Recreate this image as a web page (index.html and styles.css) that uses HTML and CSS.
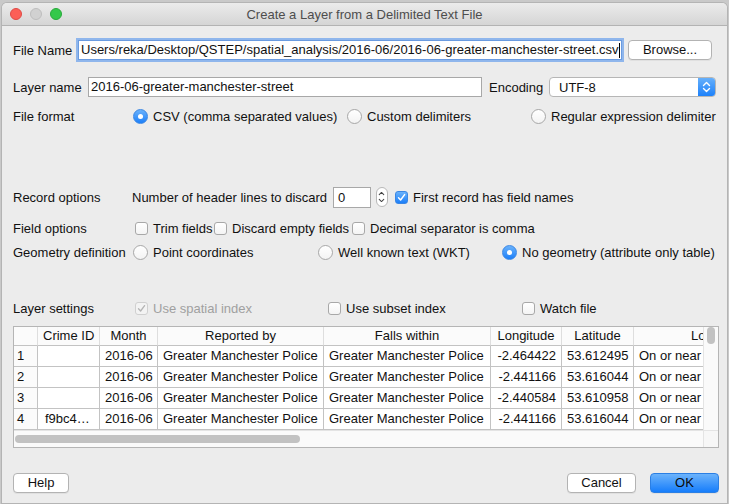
FILE: index.html
```html
<!DOCTYPE html>
<html>
<head>
<meta charset="utf-8">
<title>Create a Layer from a Delimited Text File</title>
<link rel="stylesheet" href="styles.css">
</head>
<body>
<div class="window">
  <div class="titlebar">
    <div class="lights"><span class="light red"></span><span class="light grey"></span><span class="light green"></span></div>
    <div class="title">Create a Layer from a Delimited Text File</div>
    <div></div>
  </div>
  <div class="content">
    <div class="row r-file">
      <span class="lbl w-file">File Name</span>
      <div class="input focus w-path"><span class="path">Users/reka/Desktop/QSTEP/spatial_analysis/2016-06/2016-06-greater-manchester-street.csv</span><span class="caret"></span></div>
      <div class="btn browse">Browse...</div>
    </div>

    <div class="row r-layer">
      <span class="lbl w-layer">Layer name</span>
      <div class="input w-lname">2016-06-greater-manchester-street</div>
      <span class="lbl w-enc">Encoding</span>
      <div class="select">
        <span class="sel-text">UTF-8</span>
        <span class="sel-arrow"><svg width="17" height="20" viewBox="0 0 17 20"><path d="M5.5 8.5 L8.5 5.5 L11.5 8.5 M5.5 11.5 L8.5 14.5 L11.5 11.5" fill="none" stroke="#fff" stroke-width="1.4" stroke-linecap="round" stroke-linejoin="round"/></svg></span>
      </div>
    </div>

    <div class="row r-format">
      <span class="lbl w-120">File format</span>
      <div class="opt w-csv"><span class="radio on"></span><span>CSV (comma separated values)</span></div>
      <div class="opt w-custom"><span class="radio"></span><span>Custom delimiters</span></div>
      <div class="opt"><span class="radio"></span><span>Regular expression delimiter</span></div>
    </div>

    <div class="row r-record">
      <span class="lbl w-119">Record options</span>
      <span class="w-numhdr">Number of header lines to discard</span>
      <div class="input spin-in">0</div>
      <div class="spinner"><svg width="12" height="20" viewBox="0 0 12 20"><path d="M3.5 7.5 L6 5 L8.5 7.5 M3.5 12.5 L6 15 L8.5 12.5" fill="none" stroke="#444" stroke-width="1.1" stroke-linecap="round" stroke-linejoin="round"/></svg></div>
      <div class="opt first"><span class="cb on"><svg width="11" height="11" viewBox="0 0 11 11"><path d="M2.5 5.8 L4.6 8 L8.6 2.6" fill="none" stroke="#fff" stroke-width="1.5" stroke-linecap="round" stroke-linejoin="round"/></svg></span><span>First record has field names</span></div>
    </div>

    <div class="row r-field">
      <span class="lbl w-122">Field options</span>
      <div class="opt w-trim"><span class="cb"></span><span>Trim fields</span></div>
      <div class="opt w-discard"><span class="cb"></span><span>Discard empty fields</span></div>
      <div class="opt"><span class="cb"></span><span>Decimal separator is comma</span></div>
    </div>

    <div class="row r-geom">
      <span class="lbl w-120">Geometry definition</span>
      <div class="opt w-point"><span class="radio"></span><span>Point coordinates</span></div>
      <div class="opt w-wkt"><span class="radio"></span><span>Well known text (WKT)</span></div>
      <div class="opt"><span class="radio on"></span><span>No geometry (attribute only table)</span></div>
    </div>

    <div class="row r-settings">
      <span class="lbl w-122">Layer settings</span>
      <div class="opt w-spatial disabled"><span class="cb dis"><svg width="11" height="11" viewBox="0 0 11 11"><path d="M2.5 5.8 L4.6 8 L8.6 2.6" fill="none" stroke="#b4b4b4" stroke-width="1.3" stroke-linecap="round" stroke-linejoin="round"/></svg></span><span>Use spatial index</span></div>
      <div class="opt w-subset"><span class="cb"></span><span>Use subset index</span></div>
      <div class="opt"><span class="cb"></span><span>Watch file</span></div>
    </div>

    <div class="table">
      <div class="t-top">
        <div class="viewport">
          <div class="trow thead">
            <div class="c"></div>
            <div class="c">Crime ID</div>
            <div class="c">Month</div>
            <div class="c">Reported by</div>
            <div class="c">Falls within</div>
            <div class="c">Longitude</div>
            <div class="c">Latitude</div>
            <div class="c">Location</div>
          </div>
          <div class="trow">
            <div class="c num">1</div>
            <div class="c"></div>
            <div class="c r">2016-06</div>
            <div class="c">Greater Manchester Police</div>
            <div class="c">Greater Manchester Police</div>
            <div class="c r">-2.464422</div>
            <div class="c r">53.612495</div>
            <div class="c">On or near</div>
          </div>
          <div class="trow">
            <div class="c num">2</div>
            <div class="c"></div>
            <div class="c r">2016-06</div>
            <div class="c">Greater Manchester Police</div>
            <div class="c">Greater Manchester Police</div>
            <div class="c r">-2.441166</div>
            <div class="c r">53.616044</div>
            <div class="c">On or near</div>
          </div>
          <div class="trow">
            <div class="c num">3</div>
            <div class="c"></div>
            <div class="c r">2016-06</div>
            <div class="c">Greater Manchester Police</div>
            <div class="c">Greater Manchester Police</div>
            <div class="c r">-2.440584</div>
            <div class="c r">53.610958</div>
            <div class="c">On or near</div>
          </div>
          <div class="trow">
            <div class="c num">4</div>
            <div class="c id">f9bc4…</div>
            <div class="c r">2016-06</div>
            <div class="c">Greater Manchester Police</div>
            <div class="c">Greater Manchester Police</div>
            <div class="c r">-2.441166</div>
            <div class="c r">53.616044</div>
            <div class="c">On or near</div>
          </div>
        </div>
        <div class="vscroll"><div class="vthumb"></div></div>
      </div>
      <div class="t-bottom">
        <div class="hscroll"><div class="hthumb"></div></div>
        <div class="corner"></div>
      </div>
    </div>

    <div class="buttons">
      <div class="btn help">Help</div>
      <div class="spacer"></div>
      <div class="btn cancel">Cancel</div>
      <div class="btn ok">OK</div>
    </div>
  </div>
</div>
</body>
</html>
```

FILE: styles.css
```css
* { box-sizing: border-box; }
html, body { margin: 0; padding: 0; }
body {
  width: 729px;
  height: 504px;
  overflow: hidden;
  background: #c9c9c9;
  font-family: "Liberation Sans", Arial, sans-serif;
  font-size: 13px;
  color: #111;
}
.window {
  margin: 3px 0 0 2px;
  width: 725px;
  height: 500px;
  background: #ececec;
  border-radius: 5px 5px 0 0;
  box-shadow: 0 0 0 1px #b4b4b4;
  overflow: hidden;
}
.titlebar {
  height: 23px;
  display: grid;
  grid-template-columns: 1fr auto 1fr;
  align-items: center;
  background: linear-gradient(#ebebeb, #d5d5d5);
  border-bottom: 1px solid #b3b3b3;
}
.lights { display: flex; gap: 8px; padding-left: 8px; }
.light { width: 12px; height: 12px; border-radius: 50%; }
.red { background: #fc5f57; border: 1px solid #de4a45; }
.grey { background: #d1d1d1; border: 1px solid #bdbdbd; }
.green { background: #34c84a; border: 1px solid #27a93a; }
.title { color: #4d4d4d; font-size: 13px; }

.content { padding: 0 8px 0 11px; }
.row { display: flex; align-items: center; }
.lbl { flex: none; }
.w-file { width: 65px; }
.w-layer { width: 75px; }
.w-enc { width: 60px; margin-left: 7px; }
.w-120 { width: 120px; flex: none; }
.w-119 { width: 119px; flex: none; }
.w-122 { width: 122px; flex: none; }

.input {
  background: #fff;
  border: 1px solid #a8a8a8;
  height: 20px;
  line-height: 18px;
  padding: 0 2px;
  white-space: nowrap;
  overflow: hidden;
  flex: none;
}
.focus { box-shadow: 0 0 0 2px #8fb6ec; border-color: #6a9be0; }
.w-path { width: 544px; display: flex; align-items: center; }
.path { white-space: nowrap; }
.caret { display: inline-block; width: 1px; height: 15px; background: #000; flex: none; }
.w-lname { width: 394px; }

.btn {
  background: #fff;
  border: 1px solid #b3b3b3;
  border-radius: 4px;
  height: 20px;
  line-height: 18px;
  text-align: center;
  flex: none;
  box-shadow: 0 1px 0 rgba(0,0,0,0.05);
}
.browse { width: 84px; margin-left: 6px; }

.r-file { margin-top: 14px; height: 20px; }
.r-layer { margin-top: 17px; height: 20px; }
.select {
  width: 167px;
  height: 20px;
  display: flex;
  align-items: center;
  background: #fff;
  border: 1px solid #b6b6b6;
  border-radius: 4px;
  overflow: hidden;
  flex: none;
}
.sel-text { padding-left: 9px; flex: 1; }
.sel-arrow {
  width: 17px;
  height: 20px;
  margin-top: -1px;
  margin-bottom: -1px;
  background: linear-gradient(#6ab2fb, #1a7ffa);
  display: flex;
}

.r-format { margin-top: 10px; height: 18px; }
.opt { display: flex; align-items: center; gap: 5px; flex: none; white-space: nowrap; }
.w-csv { width: 214px; }
.w-custom { width: 184px; }

.radio {
  width: 15px;
  height: 15px;
  border-radius: 50%;
  border: 1px solid #a7a7a7;
  background: linear-gradient(#fff, #f3f3f3);
  flex: none;
  display: flex;
  align-items: center;
  justify-content: center;
}
.radio.on { background: linear-gradient(#6ab2fb, #1c7ff9); border-color: #3b87e4; }
.radio.on::after { content: ""; width: 5px; height: 5px; border-radius: 50%; background: #fff; }

.cb {
  width: 13px;
  height: 13px;
  border: 1px solid #a8a8a8;
  border-radius: 3px;
  background: linear-gradient(#fff, #f4f4f4);
  flex: none;
  display: flex;
  align-items: center;
  justify-content: center;
}
.cb.on { background: linear-gradient(#6ab2fb, #1c7ff9); border-color: #3b87e4; }
.cb.dis { background: #f3f3f3; border-color: #d0d0d0; }
.disabled { color: #a0a0a0; }

.r-record { margin-top: 61px; height: 22px; }
.w-numhdr { width: 201px; flex: none; }
.spin-in { width: 38px; height: 21px; padding-left: 4px; line-height: 19px; }
.spinner {
  width: 12px;
  height: 20px;
  margin-left: 5px;
  border: 1px solid #b8b8b8;
  border-radius: 6px;
  background: #fff;
  display: flex;
  flex: none;
}
.spinner svg { margin-left: -1px; margin-top: -1px; }
.first { margin-left: 7px; }

.r-field { margin-top: 12px; height: 16px; }
.w-trim { width: 79px; }
.w-discard { width: 138px; }

.r-geom { margin-top: 8px; height: 16px; }
.w-point { width: 185px; }
.w-wkt { width: 184px; }

.r-settings { margin-top: 40px; height: 16px; }
.w-spatial { width: 193px; }
.w-subset { width: 194px; }

.table {
  margin-top: 10px;
  width: 706px;
  height: 122px;
  border: 1px solid #b5b5b5;
  background: #fff;
  display: flex;
  flex-direction: column;
}
.t-top { display: flex; height: 103px; }
.viewport { width: 689px; overflow: hidden; }
.trow {
  display: grid;
  grid-template-columns: 24px 62px 58px 166px 167px 71px 72px 164px;
  height: 21px;
  width: 784px;
}
.c {
  border-right: 1px solid #c3c3c3;
  border-bottom: 1px solid #c3c3c3;
  padding: 0 5px;
  line-height: 20px;
  white-space: nowrap;
  overflow: hidden;
}
.c.r { text-align: right; }
.c.num { padding-left: 3px; background: #fbfbfb; }
.c.id { padding-left: 7px; }
.thead { height: 19px; }
.thead .c {
  text-align: center;
  line-height: 18px;
  background: #fbfbfb;
  border-right-color: #dedede;
  border-bottom-color: #c3c3c3;
}
.vscroll {
  width: 15px;
  background: #fafafa;
  border-left: 1px solid #e4e4e4;
  padding: 0 3px 0 3px;
}
.vthumb { width: 8px; height: 17px; background: #c2c2c2; border-radius: 4px; }
.t-bottom { display: flex; height: 17px; }
.hscroll {
  width: 689px;
  background: #fafafa;
  border-top: 1px solid #e4e4e4;
  padding: 4px 0 0 1px;
}
.hthumb { width: 285px; height: 8px; background: #c2c2c2; border-radius: 4px; }
.corner { width: 15px; background: #f7f7f7; border-top: 1px solid #e4e4e4; border-left: 1px solid #e4e4e4; }

.buttons { display: flex; margin-top: 25px; height: 20px; }
.spacer { flex: 1; }
.help { width: 56px; }
.cancel { width: 69px; margin-right: 14px; }
.ok {
  width: 69px;
  background: linear-gradient(#6cb3fb, #167dfb);
  border-color: #2b7fe4;
  color: #0a0a0a;
}
```
